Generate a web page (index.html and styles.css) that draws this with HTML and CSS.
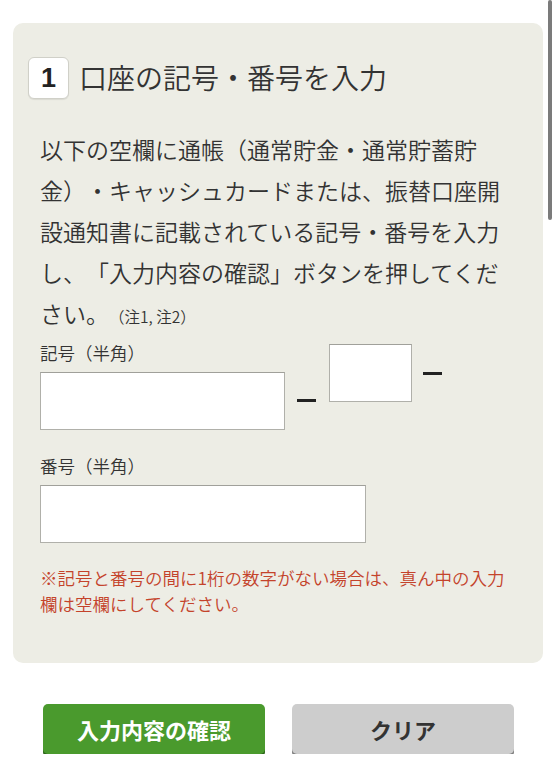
FILE: index.html
```html
<!DOCTYPE html>
<html lang="ja">
<head>
<meta charset="utf-8">
<title>口座の記号・番号を入力</title>
<link rel="stylesheet" href="styles.css">
</head>
<body>
<div class="scrollbar"></div>
<section class="panel">
  <h2 class="heading"><span class="badge">1</span><span class="title">口座の記号・番号を入力</span></h2>
  <p class="lead">以下の空欄に通帳（通常貯金・通常貯蓄貯金）・キャッシュカードまたは、振替口座開設通知書に記載されている記号・番号を入力し、「入力内容の確認」ボタンを押してください。<span class="notes">（注1, 注2）</span></p>
  <div class="kigou-row">
    <div class="field">
      <label class="label">記号（半角）</label>
      <input class="input input-kigou" type="text">
    </div>
    <span class="dash dash-1"></span>
    <input class="input input-mid" type="text">
    <span class="dash dash-2"></span>
  </div>
  <div class="field field-bangou">
    <label class="label">番号（半角）</label>
    <input class="input input-bangou" type="text">
  </div>
  <p class="caution">※記号と番号の間に1桁の数字がない場合は、真ん中の入力欄は空欄にしてください。</p>
</section>
<div class="actions">
  <button class="btn btn-confirm" type="button">入力内容の確認</button>
  <button class="btn btn-clear" type="button">クリア</button>
</div>
</body>
</html>
```

FILE: styles.css
```css
html, body {
  margin: 0;
  padding: 0;
  background: #ffffff;
}
body {
  font-family: "Noto Sans CJK JP", "Noto Sans", sans-serif;
  font-weight: 350;
  color: #333333;
  padding-top: 23px;
  position: relative;
  text-spacing-trim: space-all;
}
.scrollbar {
  position: absolute;
  top: 0;
  left: 548px;
  width: 4px;
  height: 220px;
  border-radius: 2px;
  background: #7b7b7b;
}
.panel {
  margin: 0 14px 0 13px;
  width: 530px;
  box-sizing: border-box;
  background: #ededE5;
  border-radius: 10px;
  padding: 34px 27px 46px 27px;
}
.heading {
  margin: 0 0 0 -12px;
  display: flex;
  align-items: center;
  gap: 10px;
  font-weight: 350;
}
.badge {
  width: 41px;
  height: 42px;
  box-sizing: border-box;
  background: #ffffff;
  border: 1px solid #d0d0c8;
  border-radius: 6px;
  box-shadow: 0 1px 1px rgba(0,0,0,0.08);
  display: flex;
  align-items: center;
  justify-content: center;
  font-family: "Liberation Sans", Arial, sans-serif;
  font-weight: bold;
  font-size: 27px;
  color: #222222;
}
.title {
  font-size: 28px;
  line-height: 42px;
  color: #333333;
  margin-top: -3px;
}
.lead {
  margin: 30px 0 0 0;
  font-size: 23px;
  line-height: 41px;
  color: #333333;
}
.notes {
  font-size: 15.5px;
  line-height: 1;
}
.kigou-row {
  margin-top: 6px;
  display: flex;
  align-items: flex-start;
}
.field {
  display: flex;
  flex-direction: column;
  align-items: flex-start;
}
.label {
  font-size: 17.5px;
  line-height: 26px;
  height: 26px;
  margin-bottom: 6px;
  color: #333333;
}
.input {
  box-sizing: border-box;
  height: 58px;
  background: #ffffff;
  border: 1px solid #b0b0aa;
  border-top-color: #a0a09a;
  border-radius: 0;
  margin: 0;
  padding: 0 8px;
  font-size: 20px;
}
.input-kigou { width: 245px; }
.input-mid { width: 83px; margin-top: 4px; }
.input-bangou { width: 326px; }
.dash {
  display: block;
  width: 19px;
  height: 3px;
  background: #222222;
}
.dash-1 { margin: 59px 13px 0 12px; }
.dash-2 { margin: 32px 0 0 11px; }
.field-bangou {
  margin-top: 23px;
}
.caution {
  margin: 22px 0 0 0;
  font-size: 17.5px;
  line-height: 26px;
  color: #c4432b;
}
.actions {
  margin-top: 41px;
  display: flex;
  justify-content: center;
  gap: 27px;
}
.btn {
  width: 222px;
  height: 50px;
  border: none;
  border-radius: 5px;
  font-family: "Noto Sans CJK JP", "Noto Sans", sans-serif;
  font-weight: 700;
  font-size: 22px;
  padding: 0;
  margin: 0;
}
.btn-confirm {
  background: #4a9a2d;
  color: #ffffff;
  box-shadow: 0 3px 0 #2c6519;
}
.btn-clear {
  background: #cdcdcd;
  color: #333333;
  box-shadow: 0 3px 0 #7e7e7e;
}
```
